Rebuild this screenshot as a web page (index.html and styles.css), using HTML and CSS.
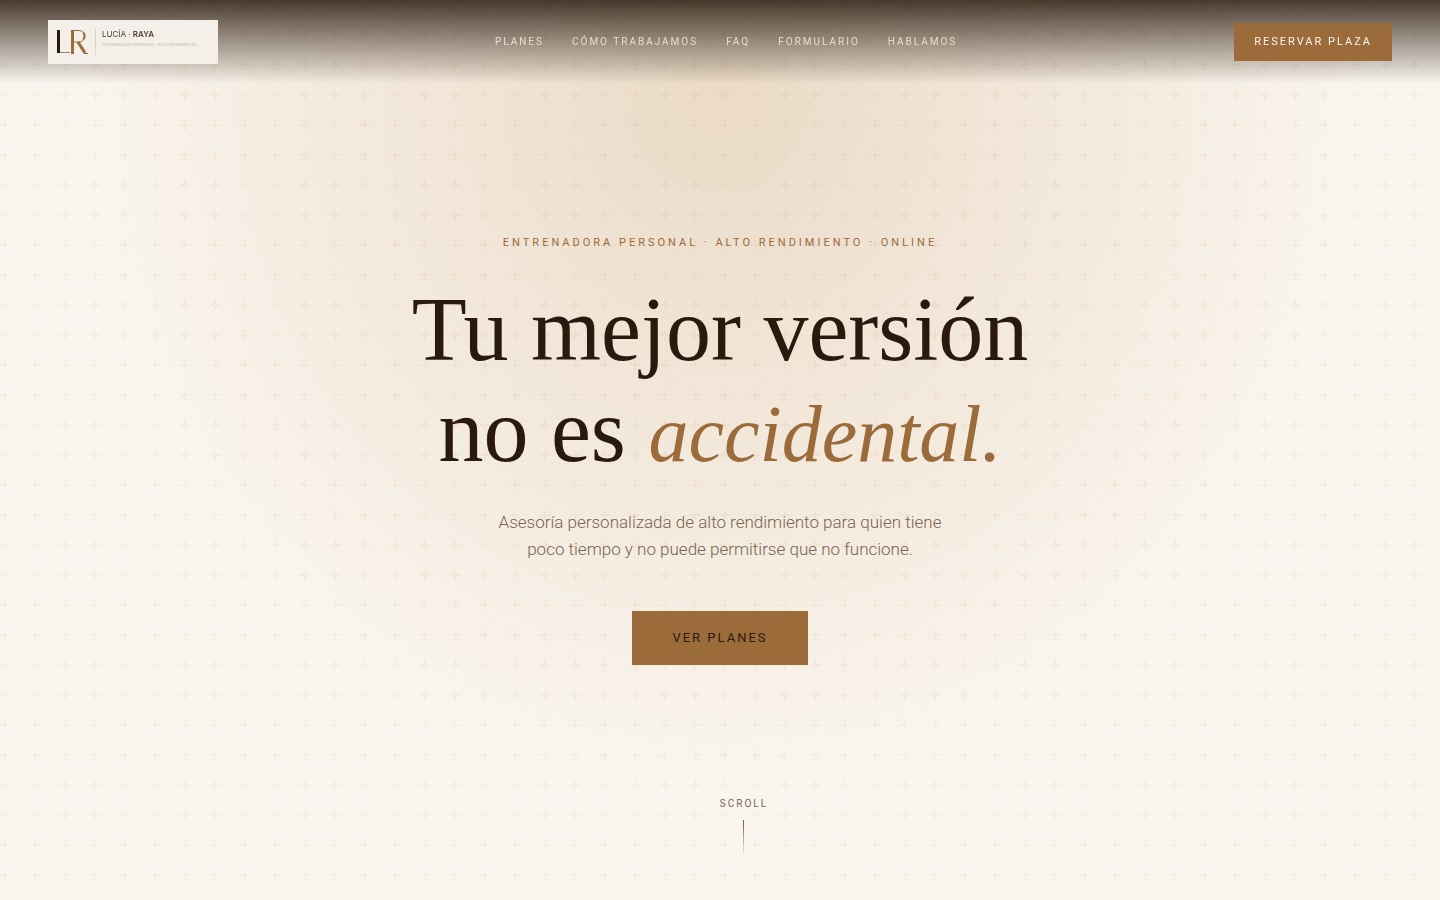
FILE: index.html
```html
<!DOCTYPE html>
<html lang="es">
<head>
  <meta charset="UTF-8" />
  <meta name="viewport" content="width=device-width, initial-scale=1.0" />
  <title>Lucía Raya</title>
  <link rel="stylesheet" href="styles.css">
</head>
<body>

<header class="site-header">
  <a class="logo" href="#inicio">
    <svg class="logo-mark" viewBox="0 0 34 28" aria-hidden="true">
      <path class="ink" d="M1 2h3v23H1z" />
      <path class="thin" d="M4 24.5h10" />
      <path class="bronze" d="M15 2h3v24h-3z" />
      <path class="curve" d="M18 2.500h4c5 0 7 2.500 7 5.500s-2 6-7 6h-4" />
      <path class="bowl" d="M27 4.500c2 2 2 5 0 7" />
      <path class="leg" d="M22 14l7 11" />
      <path class="curve" d="M28 25.500h4" />
    </svg>
    <span class="logo-text">
      <span class="logo-name">LUCÍA · <b>RAYA</b></span>
      <span class="logo-tag">ENTRENADORA PERSONAL · ALTO RENDIMIENTO</span>
    </span>
  </a>

  <nav>
    <ul class="nav-links">
      <li><a href="#planes">Planes</a></li>
      <li><a href="#como">Cómo trabajamos</a></li>
      <li><a href="#faq">FAQ</a></li>
      <li><a href="#formulario">Formulario</a></li>
      <li><a href="#hablamos">Hablamos</a></li>
    </ul>
  </nav>

  <a class="btn-nav" href="#formulario">Reservar plaza</a>
</header>

<main class="hero" id="inicio">
  <div class="hero-content">
    <p class="eyebrow">Entrenadora personal · Alto rendimiento · Online</p>
    <h1>Tu mejor versión<br>no es <em>accidental.</em></h1>
    <p class="hero-sub">Asesoría personalizada de alto rendimiento para quien tiene poco tiempo y no puede permitirse que no funcione.</p>
    <a class="btn-main" href="#planes">Ver planes</a>
  </div>

  <div class="scroll-hint">
    <span>Scroll</span>
    <span class="scroll-line"></span>
  </div>
</main>

</body>
</html>
```

FILE: styles.css
```css
:root {
  --dark: #2a1a0e;
  --bronze: #9b6b3a;
  --cream: #faf6ef;
  --muted: #7a6350;
}

* {
  box-sizing: border-box;
  margin: 0;
  padding: 0;
}

body {
  font-family: Roboto, "Liberation Sans", sans-serif;
  background: var(--cream);
  color: var(--dark);
}

a {
  text-decoration: none;
}

/* Header */
.site-header {
  position: fixed;
  top: 0;
  left: 0;
  right: 0;
  z-index: 10;
  display: flex;
  align-items: center;
  justify-content: space-between;
  padding: 20px 48px;
  background: linear-gradient(to bottom, rgba(42, 26, 14, 0.85), rgba(42, 26, 14, 0));
}

.logo {
  display: flex;
  align-items: center;
  width: 170px;
  height: 44px;
  padding: 0 8px;
  background: #f4efe8;
  color: #4a3c32;
}

.logo-mark {
  width: 34px;
  height: 28px;
  flex: none;
}

.logo-mark .ink {
  fill: #2a1a0e;
}

.logo-mark .bronze {
  fill: #9b6b3a;
}

.logo-mark .thin,
.logo-mark .curve,
.logo-mark .bowl,
.logo-mark .leg {
  fill: none;
  stroke: #9b6b3a;
  stroke-width: 1;
}

.logo-mark .thin {
  stroke: #8d8177;
}

.logo-mark .bowl {
  stroke-width: 2;
}

.logo-mark .leg {
  stroke-width: 3;
}

.logo-text {
  display: flex;
  flex-direction: column;
  gap: 2px;
  height: 26px;
  margin-left: 5px;
  padding-left: 6px;
  border-left: 1px solid #ddd3c8;
  font-family: Inter, sans-serif;
  white-space: nowrap;
}

.logo-name {
  font-size: 8px;
  line-height: 11px;
}

.logo-name b {
  font-weight: 600;
}

.logo-tag {
  font-size: 4px;
  line-height: 5px;
  color: #c4b5a5;
}

.nav-links {
  display: flex;
  gap: 28px;
  list-style: none;
}

.nav-links a {
  display: block;
  font-size: 10px;
  line-height: 16px;
  letter-spacing: 2px;
  text-transform: uppercase;
  color: #e8dccb;
}

.btn-nav {
  padding: 11px 20px;
  background: var(--bronze);
  color: #faf6ef;
  font-size: 11px;
  line-height: 16px;
  letter-spacing: 2px;
  text-transform: uppercase;
}

/* Hero */
.hero {
  display: grid;
  grid-template-rows: 1fr auto 1fr;
  justify-items: center;
  min-height: 100vh;
  padding: 44px 48px;
  background-image:
    url("data:image/svg+xml,%3Csvg xmlns='http://www.w3.org/2000/svg' width='30' height='30'%3E%3Cpath d='M6 4V0H4v4H0v2h4v4h2V6h4V4H6z' fill='%239b6b3a' fill-opacity='0.06'/%3E%3C/svg%3E"),
    radial-gradient(ellipse 46% 80% at 50% 10%, rgba(180, 120, 55, 0.22), rgba(180, 120, 55, 0));
}

.hero-content {
  grid-row: 2;
  display: flex;
  flex-direction: column;
  align-items: center;
  text-align: center;
}

.eyebrow {
  margin-bottom: 28px;
  font-size: 11px;
  line-height: 16px;
  letter-spacing: 3px;
  text-transform: uppercase;
  color: var(--bronze);
}

h1 {
  margin-bottom: 28px;
  font-family: "Liberation Serif", serif;
  font-size: 90px;
  line-height: 101px;
  font-weight: 400;
}

h1 em {
  font-size: 80px;
  line-height: 1;
  color: var(--bronze);
}

.hero-sub {
  max-width: 480px;
  margin-bottom: 48px;
  font-size: 17px;
  line-height: 27px;
  font-weight: 300;
  color: var(--muted);
}

.btn-main {
  padding: 18px 40px;
  background: var(--bronze);
  color: var(--dark);
  font-size: 13px;
  line-height: 18px;
  letter-spacing: 2px;
  text-transform: uppercase;
}

.scroll-hint {
  grid-row: 3;
  align-self: end;
  display: flex;
  flex-direction: column;
  align-items: center;
  gap: 8px;
  padding-left: 48px;
  font-size: 10px;
  line-height: 16px;
  letter-spacing: 2px;
  text-transform: uppercase;
  color: var(--muted);
}

.scroll-line {
  width: 1px;
  height: 36px;
  background: linear-gradient(to bottom, #7a5a3a, transparent);
}
```
